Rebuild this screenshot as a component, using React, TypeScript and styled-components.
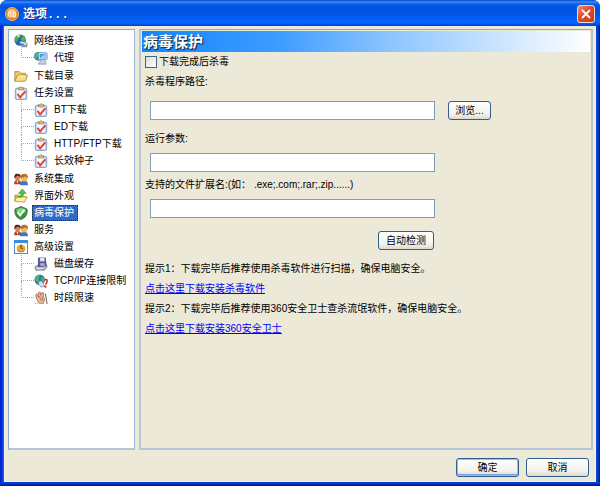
import React, { useState } from "react";
import styled, { createGlobalStyle, css } from "styled-components";

const GlobalStyle = createGlobalStyle`
  * { box-sizing: border-box; }
  body { margin: 0; background: #fff; }
  body, button, input {
    font-family: "Liberation Sans", "Noto Sans CJK SC", sans-serif;
    font-size: 10px;
    line-height: 14px;
    color: #000;
  }
  ul { list-style: none; margin: 0; padding: 0; }
`;

const Window = styled.main`
  display: flex;
  flex-direction: column;
  min-height: 100vh;
  padding: 0 4px 4px;
  border-radius: 7px 7px 0 0;
  background:
    linear-gradient(to top, #001590 0, #0030c0 2px, #0848d8 4px, transparent 4px),
    linear-gradient(to right, #0019cf 0, #0831d9 2px, #166aee 4px, #0855dd 50%, #0148d8 calc(100% - 3px), #001590 100%);
`;

const TitleBar = styled.header`
  display: flex;
  align-items: center;
  height: 26px;
  margin: 0 -4px;
  padding: 2px 5px 0 5px;
  gap: 4px;
  border-radius: 7px 7px 0 0;
  background: linear-gradient(to bottom, #0a48c8 0, #3a8cf8 2px, #0860ee 4px, #0052e0 8px, #0055e8 14px, #0066ff 22px, #0058ee 24px, #0040c4 26px);
`;

const WindowTitle = styled.h1`
  flex: 1;
  margin: 0;
  padding-top: 1px;
  font-family: "Liberation Mono", "Noto Sans CJK SC", sans-serif;
  font-size: 12px;
  line-height: 18px;
  font-weight: bold;
  color: #fff;
  text-shadow: 1px 1px 0 #0a2a88;
`;

const CloseButton = styled.button`
  display: flex;
  align-items: center;
  justify-content: center;
  width: 18px;
  height: 18px;
  padding: 0;
  border: 1px solid #f4d8d4;
  border-radius: 3px;
  background: linear-gradient(135deg, #f09478, #e05030 40%, #c83818);
`;

const Body = styled.div`
  flex: 1;
  display: flex;
  flex-direction: column;
  padding: 3px 2px 4px 3px;
  border: 1px solid #f4f2e4;
  border-top: 0;
  background: #ece9d8;
`;

const Columns = styled.div`
  flex: 1;
  display: flex;
  gap: 4px;
`;

const Sidebar = styled.nav`
  flex: 0 0 127px;
  padding: 2px 0 0 5px;
  border: 1px solid #8fa9c4;
  border-right-color: #a3bbdc;
  border-bottom: 2px solid #b6c6d6;
  background: #fff;
`;

const SubList = styled.ul`
  padding-bottom: 1px;
`;

const TreeRow = styled.li`
  display: flex;
  align-items: center;
  height: 17px;
`;

const TreeButton = styled.button`
  display: flex;
  align-items: center;
  gap: 4px;
  height: 17px;
  padding: 0;
  border: 0;
  background: none;
  white-space: nowrap;
  svg { flex: none; }
`;

const TreeText = styled.span<{ $selected: boolean }>`
  padding: 0 3px 0 1px;
  border: 1px solid transparent;
  ${(p) =>
    p.$selected &&
    css`
      color: #fff;
      background: #316ac5;
      border: 1px dotted #1b2f50;
    `}
`;

const Elbow = styled.span<{ $last: boolean }>`
  display: flex;
  flex-direction: column;
  width: 13px;
  height: 17px;
  margin-left: 7px;
  &::before {
    content: "";
    height: 9px;
    border-left: 1px dotted #a8a8a8;
    border-bottom: 1px dotted #a8a8a8;
  }
  &::after {
    content: "";
    height: 8px;
    border-left: ${(p) => (p.$last ? "0" : "1px dotted #a8a8a8")};
  }
`;

const Panel = styled.section`
  flex: 1;
  min-width: 0;
  padding: 1px;
  border: 1px solid #8fa9c4;
  border-width: 1px 2px 2px;
  border-color: #8fa9c4 #b6c6d6 #b6c6d6;
`;

const PanelTitle = styled.h2`
  margin: 0;
  padding: 1px 1px 0;
  font-size: 15px;
  line-height: 20px;
  font-weight: bold;
  color: #fff;
  text-shadow: 1px 1px 0 #1c3350, 1px 1px 1px #1c3350;
  background: linear-gradient(to right, #1484ff, #3c9cff 30%, #8cc4ff 55%, #fff);
`;

const Form = styled.form`
  display: flex;
  flex-direction: column;
  padding: 3px;
`;

const CheckRow = styled.label`
  display: flex;
  align-items: center;
  gap: 2px;
  height: 14px;
`;

const CheckBox = styled.input`
  appearance: none;
  width: 12px;
  height: 12px;
  margin: 0;
  border: 1px solid #3a6688;
  background: linear-gradient(135deg, #dcdcd6, #fff);
  &:checked { box-shadow: inset 0 0 0 3px #21a121; }
`;

const Field = styled.div<{ $gap: number; $inner: number }>`
  display: flex;
  flex-direction: column;
  gap: ${(p) => p.$inner}px;
  margin-top: ${(p) => p.$gap}px;
`;

const FieldRow = styled.div`
  display: flex;
  gap: 13px;
  padding-left: 5px;
`;

const TextBox = styled.input`
  flex: 0 1 285px;
  min-width: 0;
  height: 19px;
  padding: 0 3px;
  border: 1px solid #7f9db9;
  background: #fff;
`;

const PushButton = styled.button<{ $width: number; $primary?: boolean }>`
  width: ${(p) => p.$width}px;
  height: 19px;
  padding: 0;
  border: 1px solid #2f5f90;
  border-radius: 3px;
  white-space: nowrap;
  background: linear-gradient(#fff, #f3f2ec 70%, #dcd8cc);
  ${(p) => p.$primary && "box-shadow: inset 0 0 0 1px #9dbcf0, inset 0 -2px 0 #7d9fe0;"}
`;

const DetectRow = styled.div`
  display: flex;
  width: 289px;
  max-width: 100%;
  justify-content: flex-end;
  margin-top: 13px;
`;

const Hints = styled.div`
  display: flex;
  flex-direction: column;
  align-items: flex-start;
  gap: 6px;
  margin-top: 12px;
`;

const Hint = styled.p`
  margin: 0;
`;

const HintLink = styled.a`
  color: #0000ff;
  text-decoration: underline;
`;

const Footer = styled.footer`
  display: flex;
  justify-content: flex-end;
  gap: 7px;
  padding: 8px 4px 0 0;
`;

type IconName =
  | "globe" | "proxy" | "folder" | "task" | "users" | "skin"
  | "shield" | "clock" | "disk" | "limit" | "hand";

const drawings: Record<IconName, React.ReactNode> = {
  globe: (
    <>
      <circle cx="7" cy="7" r="6.5" fill="#2467bd" />
      <path d="M2 3q3-3 6-2L7 4 4 6 3 9 1 8Q0 5 2 3zM9 3l3-1 1 5-3 2-2-3z" fill="#58b34a" />
      <path d="M3 2q2-2 4-1L5 4z" fill="#b7e8a0" />
      <path d="M6 9q4-3 9 2v2l-3 1-2-3-2 1z" fill="#c9dced" stroke="#456788" strokeWidth=".8" />
      <path d="M9 12l6 1v2H8z" fill="#7f99b2" />
    </>
  ),
  proxy: (
    <>
      <circle cx="5" cy="6" r="5" fill="#2c79c9" />
      <path d="M1 4l4-3 2 3-3 2-1 3-2-1z" fill="#5cb84c" />
      <rect x="5" y="2" width="10" height="8" rx="1" fill="#e0ecf7" stroke="#6a8fb8" />
      <rect x="6.5" y="3.5" width="7" height="5" fill="#3b9df0" />
      <path d="M7 8l5-4h1v4z" fill="#9bd8ff" />
      <path d="M8 10h4l2 5H5z" fill="#c2cfe0" stroke="#7089a5" strokeWidth=".7" />
    </>
  ),
  folder: (
    <>
      <path d="M1 14V3h5l2 2h5v3" fill="#f0cb62" stroke="#a9822a" />
      <path d="M1 14l3-7h11.5L13 14z" fill="#fbdf85" stroke="#b48c2e" />
      <path d="M5 8h8" stroke="#fffbdc" />
    </>
  ),
  task: (
    <>
      <rect x="1.5" y="2.5" width="13" height="13" rx="2" fill="#c6daf5" stroke="#7797c5" />
      <rect x="3.5" y="4.5" width="9" height="9" fill="#f6f9ff" />
      <path d="M5 4.500V2h2l1-1.500L9 2h2v2.500z" fill="#e2c080" stroke="#8a6c38" strokeWidth=".7" />
      <path d="M4 9l3 4 6-7" fill="none" stroke="#dd4a2f" strokeWidth="2.200" />
    </>
  ),
  users: (
    <>
      <path d="M0 14q0-5 4-5t5 5z" fill="#b3452d" />
      <circle cx="4" cy="6" r="3.300" fill="#d98455" />
      <path d="M.5 7Q0 1 4 2q4 0 4 4L4 4z" fill="#4c2719" />
      <path d="M7 15q0-5 4.500-5t4.500 5z" fill="#3479d1" />
      <circle cx="11.500" cy="7" r="3.800" fill="#f3b95c" />
      <path d="M8 7q-1-5 4-5 4 0 4 5l-3-2z" fill="#b8701e" />
      <path d="M3 10l1 3 1-3z" fill="#fff" />
    </>
  ),
  skin: (
    <>
      <path d="M1 14V7h4l1 2h7v2" fill="#f3cf5c" stroke="#a98627" />
      <path d="M1 14l2-5h12l-3 6z" fill="#fff0a0" stroke="#b7942f" />
      <path d="M4 9Q8 9 8 5H5l4.500-5L14 5h-3q0 6-7 4z" fill="#5cc13c" stroke="#2d8420" strokeWidth=".6" />
    </>
  ),
  shield: (
    <>
      <path d="M8 .5l7 3v4q-1 6-7 8-6-2-7-8v-4z" fill="#31953c" stroke="#52705a" />
      <path d="M8 2l5 2v3L8 9 3 6V4z" fill="#85d77b" />
      <path d="M4 7l3 4 5-7" fill="none" stroke="#fff" strokeWidth="2" />
    </>
  ),
  clock: (
    <>
      <rect x=".5" y=".5" width="15" height="15" fill="#fff" stroke="#3b7fd0" />
      <rect x="0" y="0" width="16" height="3.500" fill="#3d8be4" />
      <ellipse cx="8" cy="9.500" rx="5" ry="4" fill="#f1a92b" />
      <path d="M8 5v4l2 1" fill="none" stroke="#6a3b00" strokeWidth="1.200" />
      <path d="M3 11q5 3 10 0l-2 3H5z" fill="#8a94a8" />
    </>
  ),
  disk: (
    <>
      <path d="M1 11l4-2h9l1 2-3 4H2z" fill="#b7b9c5" stroke="#686b79" strokeWidth=".8" />
      <path d="M5 1h8l1 9-9 1z" fill="#555ba8" stroke="#343967" strokeWidth=".7" />
      <path d="M7 1h5v4H7z" fill="#e7e9f4" />
      <path d="M7 7h5l.5 3H7z" fill="#aeb4e2" />
      <path d="M3 13h7" stroke="#eef" />
    </>
  ),
  limit: (
    <>
      <circle cx="6.500" cy="6.500" r="6" fill="#2b78c6" />
      <path d="M1 5q1-4 6-4L5 5l1 3-3 1zM8 4l4 0v4l-3 1z" fill="#55b84b" />
      <path d="M6 8q4-1 6 6l-4 1-3-4z" fill="#cfe0ef" stroke="#5d7fa0" strokeWidth=".7" />
      <path d="M12 7q3-2 3 1 0 2-2 4" fill="none" stroke="#dc241c" strokeWidth="1.800" />
      <circle cx="13" cy="14.500" r="1.300" fill="#dc241c" />
    </>
  ),
  hand: (
    <>
      <path d="M3 9L2 5l1-2 2 4 0-5 2-1 1 4 1-3h2l0 5 1 2-1 5H6z" fill="#f0bc9c" stroke="#96593c" strokeWidth=".8" />
      <path d="M6 6l2 5M9 6l1 5" stroke="#b06c4c" />
      <path d="M13 3l2 12M1 14h1M4 14h1" stroke="#766864" strokeWidth="1.200" />
    </>
  ),
};

const Icon = ({ name }: { name: IconName }) => (
  <svg width="14" height="14" viewBox="0 0 16 16" aria-hidden="true">
    {drawings[name]}
  </svg>
);

const AppLogo = () => (
  <svg width="14" height="14" viewBox="0 0 16 16" aria-hidden="true">
    <circle cx="8" cy="8" r="7.500" fill="#f08319" stroke="#f8b660" />
    <path d="M2 5q5-6 12 0-6-2-12 0z" fill="#ffc98a" />
    <path d="M4 11q-1-5 2-6v7M8 4v8M10 12V5q4 2 1 7" fill="none" stroke="#fff4dc" strokeWidth="1.500" />
  </svg>
);

interface Node {
  label: string;
  icon: IconName;
  children?: Node[];
}

const tree: Node[] = [
  { label: "网络连接", icon: "globe", children: [{ label: "代理", icon: "proxy" }] },
  { label: "下载目录", icon: "folder" },
  {
    label: "任务设置",
    icon: "task",
    children: [
      { label: "BT下载", icon: "task" },
      { label: "ED下载", icon: "task" },
      { label: "HTTP/FTP下载", icon: "task" },
      { label: "长效种子", icon: "task" },
    ],
  },
  { label: "系统集成", icon: "users" },
  { label: "界面外观", icon: "skin" },
  { label: "病毒保护", icon: "shield" },
  { label: "服务", icon: "users" },
  {
    label: "高级设置",
    icon: "clock",
    children: [
      { label: "磁盘缓存", icon: "disk" },
      { label: "TCP/IP连接限制", icon: "limit" },
      { label: "时段限速", icon: "hand" },
    ],
  },
];

export default function App() {
  const [selected, setSelected] = useState("病毒保护");

  const entry = (node: Node) => (
    <TreeButton type="button" onClick={() => setSelected(node.label)}>
      <Icon name={node.icon} />
      <TreeText $selected={selected === node.label}>{node.label}</TreeText>
    </TreeButton>
  );

  return (
    <>
      <GlobalStyle />
      <Window lang="zh-CN">
        <TitleBar>
          <AppLogo />
          <WindowTitle>选项...</WindowTitle>
          <CloseButton type="button" aria-label="关闭">
            <svg width="10" height="10" viewBox="0 0 10 10" aria-hidden="true">
              <path d="M1 1l8 8M9 1L1 9" stroke="#fff" strokeWidth="1.800" />
            </svg>
          </CloseButton>
        </TitleBar>
        <Body>
          <Columns>
            <Sidebar>
              <ul>
                {tree.map((node) => (
                  <React.Fragment key={node.label}>
                    <TreeRow>{entry(node)}</TreeRow>
                    {node.children && (
                      <li>
                        <SubList>
                          {node.children.map((child, i) => (
                            <TreeRow key={child.label}>
                              <Elbow $last={i === node.children!.length - 1} />
                              {entry(child)}
                            </TreeRow>
                          ))}
                        </SubList>
                      </li>
                    )}
                  </React.Fragment>
                ))}
              </ul>
            </Sidebar>
            <Panel>
              <PanelTitle>病毒保护</PanelTitle>
              <Form onSubmit={(e) => e.preventDefault()}>
                <CheckRow>
                  <CheckBox type="checkbox" />
                  下载完成后杀毒
                </CheckRow>
                <Field $gap={6} $inner={12}>
                  <label htmlFor="path">杀毒程序路径:</label>
                  <FieldRow>
                    <TextBox id="path" type="text" />
                    <PushButton type="button" $width={43}>浏览...</PushButton>
                  </FieldRow>
                </Field>
                <Field $gap={12} $inner={7}>
                  <label htmlFor="args">运行参数:</label>
                  <FieldRow>
                    <TextBox id="args" type="text" />
                  </FieldRow>
                </Field>
                <Field $gap={6} $inner={7}>
                  <label htmlFor="ext">{"支持的文件扩展名:(如\uFF1A .exe;.com;.rar;.zip......)"}</label>
                  <FieldRow>
                    <TextBox id="ext" type="text" />
                  </FieldRow>
                </Field>
                <DetectRow>
                  <PushButton type="button" $width={56}>自动检测</PushButton>
                </DetectRow>
                <Hints>
                  <Hint>{"提示1\uFF1A下载完毕后推荐使用杀毒软件进行扫描\uFF0C确保电脑安全。"}</Hint>
                  <HintLink href="#antivirus">点击这里下载安装杀毒软件</HintLink>
                  <Hint>{"提示2\uFF1A下载完毕后推荐使用360安全卫士查杀流氓软件\uFF0C确保电脑安全。"}</Hint>
                  <HintLink href="#360safe">点击这里下载安装360安全卫士</HintLink>
                </Hints>
              </Form>
            </Panel>
          </Columns>
          <Footer>
            <PushButton type="button" $width={63} $primary>确定</PushButton>
            <PushButton type="button" $width={63}>取消</PushButton>
          </Footer>
        </Body>
      </Window>
    </>
  );
}
